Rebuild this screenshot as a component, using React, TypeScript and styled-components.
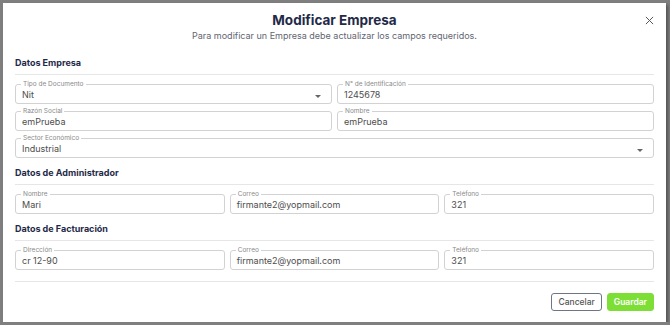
import { createGlobalStyle } from "styled-components";
import styled from "styled-components";

const GlobalStyle = createGlobalStyle`
  html, body {
    margin: 0;
    padding: 0;
    background: #7f7f7f;
    font-family: Inter, "Noto Sans", sans-serif;
  }
`;

type Field = {
  label: string;
  value: string;
  select?: boolean;
};

type Section = {
  title: string;
  rows: Field[][];
};

const sections: Section[] = [
  {
    title: "Datos Empresa",
    rows: [
      [
        { label: "Tipo de Documento", value: "Nit", select: true },
        { label: "N° de Identificación", value: "1245678" },
      ],
      [
        { label: "Razón Social", value: "emPrueba" },
        { label: "Nombre", value: "emPrueba" },
      ],
      [{ label: "Sector Económico", value: "Industrial", select: true }],
    ],
  },
  {
    title: "Datos de Administrador",
    rows: [
      [
        { label: "Nombre", value: "Mari" },
        { label: "Correo", value: "firmante2@yopmail.com" },
        { label: "Teléfono", value: "321" },
      ],
    ],
  },
  {
    title: "Datos de Facturación",
    rows: [
      [
        { label: "Dirección", value: "cr 12-90" },
        { label: "Correo", value: "firmante2@yopmail.com" },
        { label: "Teléfono", value: "321" },
      ],
    ],
  },
];

export default function App() {
  return (
    <>
      <GlobalStyle />
      <Modal>
        <Header>
          <Title>Modificar Empresa</Title>
          <Subtitle>
            Para modificar un Empresa debe actualizar los campos requeridos.
          </Subtitle>
          <CloseButton aria-label="Cerrar">
            <svg width="9" height="9" viewBox="0 0 10 10">
              <path
                d="M1 1L9 9M9 1L1 9"
                stroke="#555"
                strokeWidth="1.1"
                fill="none"
              />
            </svg>
          </CloseButton>
        </Header>

        {sections.map((section) => (
          <Block key={section.title}>
            <SectionTitle>{section.title}</SectionTitle>
            <Divider />
            <Rows>
              {section.rows.map((row, i) => (
                <Row key={i} $cols={row.length}>
                  {row.map((field) => (
                    <Outline key={field.label}>
                      <Legend>{field.label}</Legend>
                      <Value>{field.value}</Value>
                      {field.select && <Arrow />}
                    </Outline>
                  ))}
                </Row>
              ))}
            </Rows>
          </Block>
        ))}

        <Divider $bottom />
        <Footer>
          <Button>Cancelar</Button>
          <Button $primary>Guardar</Button>
        </Footer>
      </Modal>
    </>
  );
}

const Modal = styled.div`
  box-sizing: border-box;
  margin: 3px 0 0 3px;
  width: 663px;
  height: 319px;
  background: #fff;
  padding: 0 12px;
  box-shadow: 2px 2px 3px rgba(0, 0, 0, 0.35);
  display: flex;
  flex-direction: column;
`;

const Header = styled.div`
  position: relative;
  display: flex;
  flex-direction: column;
  align-items: center;
  padding-top: 9px;
  height: 48px;
  box-sizing: border-box;
`;

const Title = styled.h1`
  margin: 0;
  font-size: 13.5px;
  line-height: 17px;
  font-weight: 700;
  color: #1f2a48;
`;

const Subtitle = styled.p`
  margin: 0;
  font-size: 9px;
  line-height: 14px;
  color: #5f6672;
`;

const CloseButton = styled.button`
  position: absolute;
  right: 0;
  top: 13px;
  border: none;
  background: none;
  padding: 0;
  display: flex;
  cursor: pointer;
`;

const Block = styled.section`
  display: flex;
  flex-direction: column;
  margin-bottom: 3px;
`;

const SectionTitle = styled.h2`
  margin: 6px 0 0;
  font-size: 9px;
  line-height: 12px;
  font-weight: 700;
  color: #1f2a48;
`;

const Divider = styled.hr<{ $bottom?: boolean }>`
  width: 100%;
  border: none;
  border-top: 1px solid #e6e6e6;
  margin: ${(p) => (p.$bottom ? "8px 0 0" : "5px 0 6px")};
`;

const Rows = styled.div`
  display: flex;
  flex-direction: column;
  gap: 4px;
`;

const Row = styled.div<{ $cols: number }>`
  display: grid;
  grid-template-columns: repeat(${(p) => p.$cols}, 1fr);
  gap: 5px;
`;

const Outline = styled.fieldset`
  position: relative;
  margin: 0;
  padding: 0 6px;
  height: 23px;
  box-sizing: border-box;
  border: 1px solid #d2d2d2;
  border-radius: 3px;
  min-width: 0;
`;

const Legend = styled.legend`
  padding: 0 2px;
  margin-left: -1px;
  font-size: 6.5px;
  line-height: 7px;
  color: #8a8a8a;
`;

const Value = styled.div`
  font-size: 9px;
  line-height: 13px;
  color: #4d4d4d;
`;

const Arrow = styled.span`
  position: absolute;
  right: 10px;
  top: 7px;
  width: 0;
  height: 0;
  border-left: 3px solid transparent;
  border-right: 3px solid transparent;
  border-top: 3px solid #666;
`;

const Footer = styled.div`
  display: flex;
  justify-content: flex-end;
  gap: 5px;
  margin-top: 11px;
`;

const Button = styled.button<{ $primary?: boolean }>`
  height: 18px;
  padding: 0 6px;
  border-radius: 3px;
  font-family: inherit;
  font-size: 8.5px;
  font-weight: ${(p) => (p.$primary ? 600 : 500)};
  border: 1px solid ${(p) => (p.$primary ? "#7ddf35" : "#6f7585")};
  background: ${(p) => (p.$primary ? "#7ddf35" : "#fff")};
  color: ${(p) => (p.$primary ? "#fff" : "#555")};
  cursor: pointer;
`;
